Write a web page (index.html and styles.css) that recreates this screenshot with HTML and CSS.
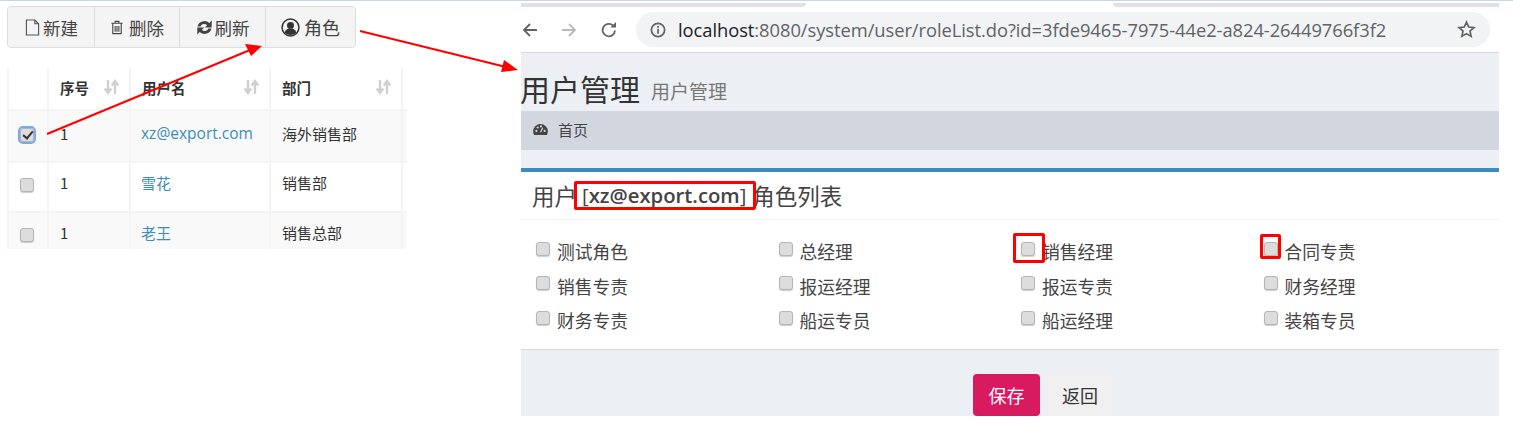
FILE: index.html
```html
<!DOCTYPE html>
<html lang="zh-CN">
<head>
<meta charset="utf-8">
<title>用户管理</title>
<link rel="stylesheet" href="styles.css">
</head>
<body>
<div class="sheet">
  <section class="left">
    <div class="toolbar">
      <button class="tool t1"><svg class="ic" viewBox="0 0 16 18"><path d="M1.500 1h9l4 4v12h-13z M10.500 1v4h4" fill="none" stroke="#555" stroke-width="1.200"/></svg>新建</button>
      <button class="tool t2"><svg class="ic ic-s" viewBox="0 0 14 16"><path d="M5 3V1.500h4V3M1 3.500h12M2.500 4v10.500h9V4M5 6.500v6M7 6.500v6M9 6.500v6" fill="none" stroke="#444" stroke-width="1.200"/></svg>删除</button>
      <button class="tool t3"><svg class="ic ic-r" viewBox="0 0 16 16"><path d="M1.500 7a6.500 6 0 0 1 11-3.300L14.800 1.500V8h-6.500l2.200-2.200a3.800 3.600 0 0 0-6.300 1.200zM14.500 9a6.500 6 0 0 1-11 3.300L1.200 14.500V8h6.500l-2.200 2.200a3.800 3.600 0 0 0 6.300-1.200z" fill="#444"/></svg>刷新</button>
      <button class="tool t4"><svg class="ic ic-l" viewBox="0 0 18 18"><circle cx="9" cy="9" r="8" fill="none" stroke="#333" stroke-width="1.400"/><circle cx="9" cy="7" r="3.300" fill="#333"/><path d="M3.500 14c.5-3 2.500-4 5.500-4s5 1 5.500 4a8 8 0 0 1-11 0z" fill="#333"/></svg>角色</button>
    </div>
    <div class="table-wrap">
      <table class="grid">
        <colgroup><col class="c1"><col class="c2"><col class="c3"><col class="c4"><col class="c5"></colgroup>
        <thead>
          <tr>
            <th></th>
            <th><span class="th-in">序号<svg class="sort" viewBox="0 0 15 16"><path d="M4 1v12M.8 9.500L4 14l3.200-4.500M11 15V3M7.800 6.500L11 2l3.200 4.500" fill="none" stroke="#d0d0d0" stroke-width="2.400"/></svg></span></th>
            <th><span class="th-in">用户名<svg class="sort" viewBox="0 0 15 16"><path d="M4 1v12M.8 9.500L4 14l3.200-4.500M11 15V3M7.800 6.500L11 2l3.200 4.500" fill="none" stroke="#d0d0d0" stroke-width="2.400"/></svg></span></th>
            <th><span class="th-in">部门<svg class="sort" viewBox="0 0 15 16"><path d="M4 1v12M.8 9.500L4 14l3.200-4.500M11 15V3M7.800 6.500L11 2l3.200 4.500" fill="none" stroke="#d0d0d0" stroke-width="2.400"/></svg></span></th>
            <th></th>
          </tr>
        </thead>
        <tbody>
          <tr class="odd r1"><td class="cb"><input type="checkbox" class="box focus" checked></td><td><span class="up">1</span></td><td><a class="link latin up">xz@export.com</a></td><td><span class="up">海外销售部</span></td><td></td></tr>
          <tr class="r2"><td class="cb"><input type="checkbox" class="box"></td><td><span class="up">1</span></td><td><a class="link up">雪花</a></td><td><span class="up">销售部</span></td><td></td></tr>
          <tr class="odd r3"><td class="cb"><input type="checkbox" class="box"></td><td><span class="up">1</span></td><td><a class="link up">老王</a></td><td><span class="up">销售总部</span></td><td></td></tr>
        </tbody>
      </table>
    </div>
  </section>

  <section class="right">
    <div class="tabs"><span class="tab tab-a"></span><span class="tab tab-b"></span></div>
    <div class="chrome">
      <svg class="nav" viewBox="0 0 18 18"><path d="M16 9H3M9 3L3 9l6 6" fill="none" stroke="#5f6368" stroke-width="1.800"/></svg>
      <svg class="nav" viewBox="0 0 18 18"><path d="M2 9h13M9 3l6 6-6 6" fill="none" stroke="#b8babd" stroke-width="1.800"/></svg>
      <svg class="nav" viewBox="0 0 18 18"><path d="M15 9.500A6.200 6.200 0 1 1 13 4.500" fill="none" stroke="#5f6368" stroke-width="1.800"/><path d="M10.500 6.500H16V1z" fill="#5f6368"/></svg>
      <div class="omni">
        <svg class="info" viewBox="0 0 14 14"><circle cx="7" cy="7" r="5.800" fill="none" stroke="#5f6368" stroke-width="1.500"/><path d="M7 6v4.200M7 3.600v1.500" stroke="#5f6368" stroke-width="1.500"/></svg>
        <span class="url"><b>localhost</b>:8080/system/user/roleList.do?id=3fde9465-7975-44e2-a824-26449766f3f2</span>
        <svg class="star" viewBox="0 0 18 18"><path d="M9 2l2.100 4.700 5 .5-3.800 3.300 1.100 5L9 12.900l-4.400 2.600 1.100-5L1.900 7.200l5-.5z" fill="none" stroke="#5f6368" stroke-width="1.600"/></svg>
      </div>
    </div>
    <div class="content">
      <h1 class="title">用户管理<small>用户管理</small></h1>
      <div class="crumb"><svg class="dash" viewBox="0 0 16 12"><path d="M8 0a8 8 0 0 0-8 8c0 1.500.4 2.800 1 4h14c.6-1.200 1-2.500 1-4a8 8 0 0 0-8-8z" fill="#444"/><circle cx="3.500" cy="7.500" r="1.200" fill="#d2d6de"/><circle cx="5" cy="3.800" r="1.200" fill="#d2d6de"/><circle cx="8.500" cy="2.600" r="1.200" fill="#d2d6de"/><circle cx="12.500" cy="7.500" r="1.200" fill="#d2d6de"/><path d="M8 9l2.500-5" stroke="#d2d6de" stroke-width="1.300"/></svg>首页</div>
      <div class="box-panel">
        <div class="panel-head"><span>用户</span><span class="strong"><span class="bracket">[</span>xz@export.com<span class="bracket">]</span></span><span>角色列表</span></div>
        <div class="roles">
          <label class="role"><input type="checkbox" class="box">测试角色</label>
          <label class="role"><input type="checkbox" class="box">总经理</label>
          <label class="role"><input type="checkbox" class="box">销售经理</label>
          <label class="role"><input type="checkbox" class="box">合同专责</label>
          <label class="role"><input type="checkbox" class="box">销售专责</label>
          <label class="role"><input type="checkbox" class="box">报运经理</label>
          <label class="role"><input type="checkbox" class="box">报运专责</label>
          <label class="role"><input type="checkbox" class="box">财务经理</label>
          <label class="role"><input type="checkbox" class="box">财务专责</label>
          <label class="role"><input type="checkbox" class="box">船运专员</label>
          <label class="role"><input type="checkbox" class="box">船运经理</label>
          <label class="role"><input type="checkbox" class="box">装箱专员</label>
        </div>
      </div>
      <div class="actions">
        <button class="btn save">保存</button>
        <button class="btn back">返回</button>
      </div>
    </div>
  </section>

  <i class="mark m1"></i>
  <i class="mark m2"></i>
  <i class="mark m3"></i>
  <svg class="arrows" viewBox="0 0 1513 426">
    <path d="M47 134L250 50M360 31L506 67" stroke="#f00" stroke-width="2" fill="none"/>
    <path d="M262 46L245 44L251 56z" fill="#f00"/>
    <path d="M518 70L504 60L501 72z" fill="#f00"/>
  </svg>
</div>
</body>
</html>
```
FILE: styles.css
```css
* { box-sizing: border-box; }
html, body { margin: 0; padding: 0; background: #fff; }
body { font-family: "Noto Sans CJK SC", "Open Sans", sans-serif; color: #333; overflow: hidden; }

.sheet { position: relative; width: 1513px; height: 426px; display: flex; border-top: 1px solid #c9d5e8; }

/* Left capture */
.left { width: 521px; flex: none; padding: 5px 0 0 7px; }
.toolbar { display: flex; width: 349px; height: 42px; border: 1px solid #ddd; border-radius: 4px; background: #f4f4f4; overflow: hidden; }
.tool { display: flex; align-items: center; justify-content: center; height: 100%; padding: 0; border: 0; border-right: 1px solid #ddd; background: #f4f4f4; font: 17.500px "Noto Sans CJK SC", sans-serif; color: #444; }
.tool:last-child { border-right: 0; }
.t1 { width: 87px; }
.t2 { width: 85px; }
.t3 { width: 86px; }
.t4 { flex: 1; font-size: 18px; }
.ic { width: 15px; height: 17px; margin-right: 3px; }
.t1 .ic { margin-left: 1px; }
.ic-s { width: 14px; height: 15px; margin-right: 5px; }
.ic-r { width: 17px; height: 17px; margin-right: 2px; }
.ic-l { width: 19px; height: 19px; margin-right: 4px; }

.table-wrap { width: 400px; height: 182px; margin-top: 19px; overflow: hidden; }
.grid { width: 405px; table-layout: fixed; border-collapse: collapse; font-size: 15px; color: #333; }
.c1 { width: 40px; } .c2 { width: 82px; } .c3 { width: 140px; } .c4 { width: 132px; } .c5 { width: 11px; }
.grid th, .grid td { border: 2px solid #f4f4f4; padding: 0 11px; text-align: left; }
.grid th:first-child, .grid td:first-child { padding: 0 2px 0 0; text-align: center; }
.grid tr:first-child th { border-top: 0; }
.grid th { height: 43px; padding-bottom: 2px; font-size: 14.500px; font-weight: 700; color: #333; }
.th-in { display: flex; align-items: center; justify-content: space-between; margin-right: -1px; }
.sort { width: 15px; height: 16px; flex: none; }
.odd { background: #f9f9f9; }
.r1 td { height: 52px; }
.r2 td { height: 50px; }
.r3 td { height: 50px; }
.up { display: inline-block; transform: translateY(-3px); }
.r2 .up, .r3 .up { transform: translateY(-5px); }
.link { color: #3c8dbc; margin-left: -1px; }
.latin { font-family: "Open Sans", "Noto Sans CJK SC", sans-serif; font-size: 15.500px; }
.cb { line-height: 0; }
.cb .box { transform: translateY(-1px); }
.r2 .cb .box, .r3 .cb .box { transform: translateY(-2px); }

.box { appearance: none; -webkit-appearance: none; display: inline-block; width: 14px; height: 14px; margin: 0; flex: none; border: 1px solid #b5b5b5; border-radius: 3px; background: #dcdcdc; box-shadow: 0 1px 1px #ccc; position: relative; }
.box.focus { outline: 2px solid #7aa7f0; outline-offset: 0; }
.box.focus::after { content: ""; position: absolute; left: 4px; top: 0; width: 4px; height: 8px; border: solid #333; border-width: 0 2.500px 2.500px 0; transform: rotate(40deg); }

/* Right capture */
.right { width: 978px; flex: none; display: flex; flex-direction: column; height: 415px; }
.tabs { height: 6px; padding-top: 2px; display: flex; justify-content: space-between; }
.tab { display: block; height: 4px; background: #dee1e6; }
.tab-a { width: 285px; border-bottom-right-radius: 6px; }
.tab-b { width: 386px; border-bottom-left-radius: 6px; }
.chrome { height: 46px; flex: none; display: flex; align-items: center; border-bottom: 1px solid #d8d8d8; background: #fff; }
.nav { width: 18px; height: 18px; flex: none; margin-right: 22px; }
.nav:first-child { margin-right: 21px; }
.nav:nth-child(2) { margin-right: 22px; }
.nav:nth-child(3) { margin-right: 18px; }
.omni { width: 854px; height: 35px; flex: none; display: flex; align-items: center; padding: 0 14px; border-radius: 18px; background: #f1f3f4; }
.info { width: 16px; height: 16px; flex: none; margin-right: 12px; }
.url { flex: 1; font: 18.330px "Open Sans", sans-serif; color: #5f6368; white-space: nowrap; overflow: hidden; letter-spacing: -.05px; }
.url b { font-weight: 400; color: #202124; }
.star { width: 19px; height: 19px; flex: none; }

.content { flex: 1; min-height: 0; background: #ecf0f5; overflow: hidden; }
.title { height: 58px; margin: 0 0 0 -1px; padding-top: 15px; font-size: 30px; line-height: 41px; font-weight: 400; color: #333; white-space: nowrap; }
.title small { margin-left: 11px; font-size: 19px; font-weight: 400; color: #777; position: relative; top: -2px; }
.crumb { height: 39px; display: flex; align-items: center; padding: 0 0 2px 12px; background: #d2d6de; font-size: 15px; color: #444; }
.dash { width: 15px; height: 11px; margin-right: 10px; }
.box-panel { margin-top: 18px; height: 182px; background: #fff; border-top: 4px solid #3c8dbc; border-bottom: 1px solid #d8dade; }
.panel-head { height: 48px; display: flex; gap: 5px; padding-left: 11px; border-bottom: 1px solid #f4f4f4; font-size: 22.500px; line-height: 46px; color: #444; white-space: nowrap; }
.strong { font: 600 20.300px/47px "Open Sans", sans-serif; color: #444; margin-right: 1px; }
.bracket { font-weight: 400; }
.roles { display: grid; grid-template-columns: repeat(4, 242.500px); grid-auto-rows: 34.500px; padding: 15px 0 0 15px; }
.role { display: flex; align-items: center; gap: 7px; font-size: 17.750px; color: #444; height: 34.500px; transform: translateY(-1px); }
.role .box { margin-top: -5px; }
.actions { display: flex; gap: 7px; padding: 24px 0 0 452px; }
.btn { height: 42px; border: 0; border-radius: 4px; font: 18px "Noto Sans CJK SC", sans-serif; }
.save { width: 67px; background: #d81b60; color: #fff; }
.back { width: 66px; background: #f0f0f0; color: #333; }

/* Annotations */
.mark { position: absolute; display: block; border: 3px solid #f00; border-radius: 2px; }
.m1 { left: 574px; top: 180px; width: 182px; height: 29px; }
.m2 { left: 1013px; top: 232px; width: 32px; height: 30px; }
.m3 { left: 1260px; top: 233px; width: 21px; height: 25px; }
.arrows { position: absolute; left: 0; top: -1px; width: 1513px; height: 426px; pointer-events: none; }
```
